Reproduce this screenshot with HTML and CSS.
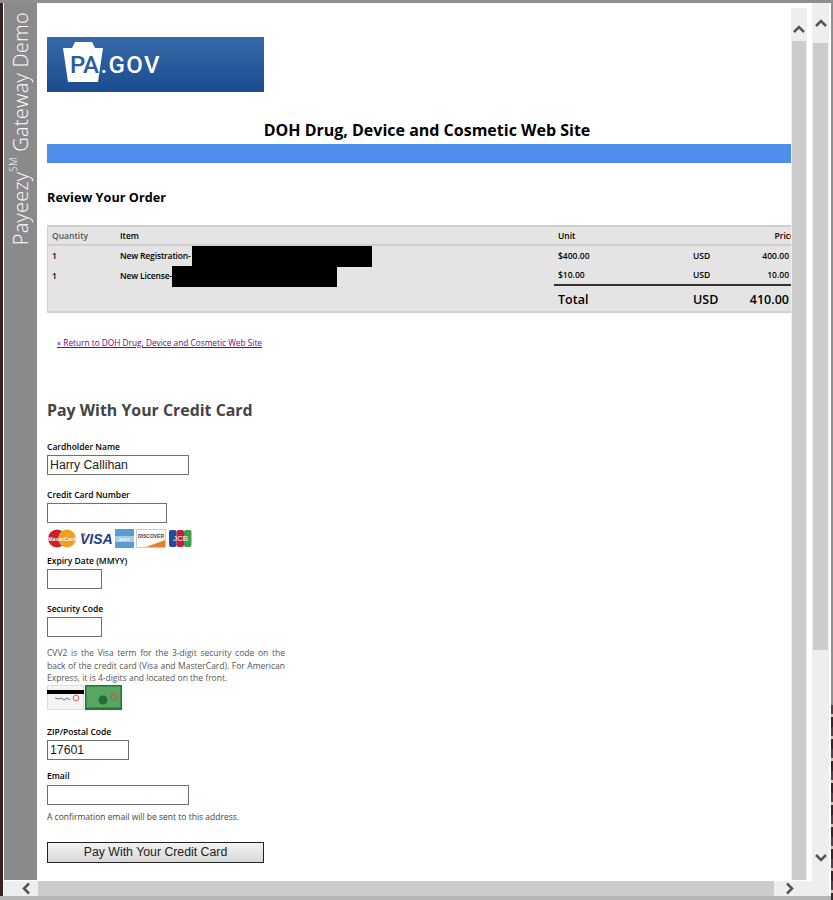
FILE: index.html
```html
<!DOCTYPE html>
<html lang="en">
<head>
  <meta charset="UTF-8">
  <title>Payeezy Gateway Demo</title>
  <link rel="stylesheet" href="styles.css">
</head>
<body>
  <div class="ventana">
    <div class="dialogo">
      <div class="cuerpo">

        <!-- Side band -->
        <div class="banda"><span>Payeezy<sup>SM</sup> Gateway Demo</span></div>

        <div class="contenido">
          <!-- Logo -->
          <div class="logo">
            <svg width="43" height="42" viewBox="0 0 43 42">
              <path class="logo-piedra" d="M13 1H30L33 7H41L36 41H6L1 7H10Z"/>
            </svg>
            <span class="logo-pa">PA</span><span class="logo-gov">.GOV</span>
          </div>

          <h1>DOH Drug, Device and Cosmetic Web Site</h1>
          <div class="barra"></div>

          <h2>Review Your Order</h2>

          <!-- Order -->
          <table class="pedido">
            <thead>
              <tr>
                <th class="col-cant gris">Quantity</th>
                <th class="col-item">Item</th>
                <th class="col-unit">Unit</th>
                <th class="col-mon"></th>
                <th class="col-precio">Price</th>
              </tr>
            </thead>
            <tbody>
              <tr>
                <td>1</td>
                <td><span class="marca">New Registration-<i class="tapa tapa-1"></i></span></td>
                <td>$400.00</td>
                <td>USD</td>
                <td class="importe">400.00</td>
              </tr>
              <tr>
                <td>1</td>
                <td><span class="marca">New License-<i class="tapa tapa-2"></i></span></td>
                <td>$10.00</td>
                <td>USD</td>
                <td class="importe">10.00</td>
              </tr>
              <tr class="total">
                <td></td>
                <td></td>
                <td>Total</td>
                <td>USD</td>
                <td class="importe">410.00</td>
              </tr>
            </tbody>
          </table>

          <a class="volver" href="#">« Return to DOH Drug, Device and Cosmetic Web Site</a>

          <h3>Pay With Your Credit Card</h3>

          <!-- Form -->
          <form class="pago">
            <label class="l-nombre">Cardholder Name</label>
            <input type="text" class="ancho-142" value="Harry Callihan">

            <label class="l-tarjeta">Credit Card Number</label>
            <input type="text" class="ancho-120">

            <div class="tarjetas">
              <svg width="30" height="19" viewBox="0 0 30 19">
                <circle cx="10" cy="9.500" r="9" fill="#c8202c"/>
                <circle cx="20" cy="9.500" r="9" fill="#f0a020"/>
                <text x="15" y="11.500" class="mc-texto">MasterCard</text>
              </svg>
              <svg width="34" height="19" viewBox="0 0 34 19">
                <path d="M1 4h5l1 4z" fill="#eda51e"/>
                <text x="1" y="15" class="visa-texto">VISA</text>
              </svg>
              <svg width="19" height="19" viewBox="0 0 19 19">
                <rect width="19" height="19" fill="#5b9bd0"/>
                <rect y="7" width="19" height="6" fill="#a6cde8"/>
                <text x="9.500" y="11.500" class="amex-texto">AMEX</text>
              </svg>
              <svg width="30" height="19" viewBox="0 0 30 19">
                <rect x=".5" y=".5" width="29" height="18" fill="#fff" stroke="#ccc"/>
                <path d="M10 18 29 11v7z" fill="#e8822a"/>
                <text x="15" y="9" class="disc-texto">DISCOVER</text>
              </svg>
              <svg class="jcb" width="23" height="19" viewBox="0 0 23 19">
                <rect x="0" y="1" width="7.500" height="17" rx="2" fill="#1f4e96"/>
                <rect x="7.500" y="1" width="7.500" height="17" rx="2" fill="#c62038"/>
                <rect x="15" y="1" width="7.500" height="17" rx="2" fill="#3f9f48"/>
                <text x="11.500" y="12" class="jcb-texto">JCB</text>
              </svg>
            </div>

            <label class="l-expira">Expiry Date (MMYY)</label>
            <input type="text" class="ancho-55">

            <label class="l-codigo">Security Code</label>
            <input type="text" class="ancho-55">

            <p class="ayuda">CVV2 is the Visa term for the 3-digit security code on the back of the credit card (Visa and MasterCard). For American Express, it is 4-digits and located on the front.</p>

            <div class="cvv">
              <svg width="37" height="25" viewBox="0 0 37 25">
                <rect x=".5" y=".5" width="36" height="24" fill="#f4f4f4" stroke="#ddd"/>
                <rect y="5" width="37" height="4" fill="#000"/>
                <path d="M8 13l4 1 2-1 3 2 3-2 3 2" fill="none" stroke="#333" stroke-width=".7"/>
                <circle cx="29" cy="13" r="2.800" fill="none" stroke="#d33" stroke-width=".8"/>
              </svg>
              <svg width="37" height="25" viewBox="0 0 37 25">
                <rect width="37" height="25" fill="#1f7a2c"/>
                <rect x="1.500" y="1.500" width="34" height="21" fill="#58a662"/>
                <circle cx="18" cy="15" r="4.500" fill="#2c6a38"/>
                <circle cx="29" cy="12" r="3" fill="none" stroke="#e33" stroke-width=".8"/>
              </svg>
            </div>

            <label class="l-zip">ZIP/Postal Code</label>
            <input type="text" class="ancho-82" value="17601">

            <label class="l-email">Email</label>
            <input type="text" class="ancho-142 campo-email">

            <p class="nota">A confirmation email will be sent to this address.</p>

            <button type="button" class="boton">Pay With Your Credit Card</button>
          </form>
        </div>

        <!-- Inner scrollbar -->
        <div class="scroll-v interno">
          <div class="scroll-tapa">
            <svg width="14" height="9" viewBox="0 0 14 9"><path d="M2 8l5-5 5 5"/></svg>
          </div>
          <div class="scroll-guia"></div>
        </div>
      </div>

      <!-- Bottom scrollbar -->
      <div class="scroll-h">
        <svg class="flecha-izq" width="10" height="13" viewBox="0 0 10 13"><path d="M8 1.500 3 6.500l5 5"/></svg>
        <div class="scroll-h-guia"></div>
        <svg class="flecha-der" width="10" height="13" viewBox="0 0 10 13"><path d="M2 1.500l5 5-5 5"/></svg>
      </div>
    </div>

    <!-- Page scrollbar -->
    <div class="scroll-v externo">
      <svg class="flecha-arriba" width="14" height="9" viewBox="0 0 14 9"><path d="M2 8l5-5 5 5"/></svg>
      <div class="scroll-guia"></div>
      <svg class="flecha-abajo" width="14" height="9" viewBox="0 0 14 9"><path d="M2 1l5 5 5-5"/></svg>
    </div>
  </div>
</body>
</html>
```

FILE: styles.css
```css
body {
  margin: 0;
  background: #fff;
  font-family: "Open Sans", sans-serif;
  color: #000;
}

.ventana {
  box-sizing: border-box;
  position: relative;
  width: 833px;
  height: 900px;
  display: flex;
  overflow: hidden;
  padding: 3px 4px 4px 4px;
  background: #fff;
  box-shadow: inset 0 3px 0 #8f8f8f, inset 0 -4px 0 #b5b5b5, inset 3px 0 0 #3a2422, inset -2px 0 0 #8f8f8f;
}

/* bit of desktop showing past the window */
.ventana::after {
  content: "";
  position: absolute;
  right: 0;
  top: 705px;
  bottom: 0;
  width: 2px;
  background: repeating-linear-gradient(#5a3a4a 0 9px, #d8c4b0 9px 12px, #3a2228 12px 22px);
}

.dialogo {
  width: 808px;
  display: flex;
  flex-direction: column;
}

.cuerpo {
  height: 877px;
  display: flex;
  overflow: hidden;
}

/* side band */
.banda {
  width: 33px;
  flex: none;
  background: #8a8a8c;
  display: flex;
  justify-content: center;
  align-items: flex-end;
}

.banda span {
  writing-mode: vertical-rl;
  transform: rotate(180deg);
  margin-bottom: 635px;
  font-size: 20px;
  font-weight: 300;
  letter-spacing: 0.25px;
  color: #fff;
  white-space: nowrap;
  line-height: 33px;
}

.banda sup {
  font-size: 10px;
  line-height: 0;
}

.contenido {
  width: 754px;
  flex: none;
  box-sizing: border-box;
  padding: 34px 0 0 10px;
  overflow: hidden;
  background: #fff;
}

/* logo */
.logo {
  width: 217px;
  height: 55px;
  display: flex;
  align-items: center;
  position: relative;
  padding-left: 23px;
  box-sizing: border-box;
  background: linear-gradient(#3669aa, #1a4c90);
  color: #fff;
  font-family: Roboto, sans-serif;
  font-weight: 500;
  font-size: 24px;
}

.logo svg {
  position: absolute;
  left: 15px;
  top: 4px;
}

.logo-piedra {
  fill: #fff;
}

.logo-pa {
  position: relative;
  color: #2a5c9f;
  letter-spacing: -0.5px;
}

.logo-gov {
  position: relative;
  margin-left: 2px;
  letter-spacing: 1.400px;
}

h1 {
  width: 760px;
  margin: 25px 0 0 0;
  font-size: 16px;
  line-height: 27px;
  text-align: center;
}

.barra {
  width: 760px;
  height: 19px;
  background: #4f8ded;
}

h2 {
  margin: 24px 0 0 0;
  font-size: 12.700px;
  line-height: 20px;
}

/* order */
.pedido {
  width: 748px;
  margin-top: 18px;
  border-collapse: collapse;
  table-layout: fixed;
  background: #e4e4e4;
  border-top: 2px solid #cfcfcf;
  border-bottom: 2px solid #d2d2d2;
  border-left: 1px solid #cfcfcf;
  font-size: 8.5px;
  font-weight: 600;
}

.pedido th {
  height: 17px;
  padding: 0 0 0 4px;
  text-align: left;
  font-weight: 600;
  border-bottom: 2px solid #cfcfcf;
}

.pedido td {
  height: 19px;
  padding: 0 0 0 4px;
}

.col-cant { width: 64px; }
.col-item { width: 434px; }
.col-unit { width: 131px; }
.col-mon { width: 46px; }

.pedido .col-precio {
  text-align: right;
  padding-right: 0;
}

.gris {
  color: #555;
}

.pedido .importe {
  text-align: right;
  padding-right: 6px;
}

.marca {
  position: relative;
  letter-spacing: -0.15px;
}

/* redacted names */
.tapa {
  position: absolute;
  top: -4px;
  height: 21px;
  background: #000;
}

.tapa-1 {
  left: calc(100% + 1.500px);
  width: 180px;
}

.tapa-2 {
  left: 100%;
  width: 165px;
}

.pedido .total td {
  height: 23px;
  padding-top: 2px;
  font-size: 12.5px;
}

.pedido .total td:nth-child(n+3) {
  border-top: 2px solid #333;
}

.volver {
  display: block;
  margin: 23px 0 0 10px;
  font-size: 8.300px;
  line-height: 14px;
  color: #800080;
}

h3 {
  margin: 48px 0 0 0;
  font-size: 15.900px;
  line-height: 24px;
  color: #444;
}

/* form */
.pago {
  display: flex;
  flex-direction: column;
  align-items: flex-start;
}

.pago label {
  font-size: 8.5px;
  font-weight: 600;
  line-height: 12px;
}

.l-nombre { margin-top: 19px; }
.l-tarjeta { margin-top: 14px; }
.l-expira { margin-top: 7px; }
.l-codigo { margin-top: 14px; }
.l-zip { margin-top: 16px; }
.l-email { margin-top: 10px; }

.pago input {
  box-sizing: border-box;
  height: 20px;
  margin: 2px 0 0 0;
  padding: 0 2px;
  border: 1px solid #707070;
  background: #fff;
  font-family: "Liberation Sans", sans-serif;
  font-size: 12.300px;
  color: #222;
}

.pago .campo-email {
  margin-top: 3px;
}

.ancho-142 { width: 142px; }
.ancho-120 { width: 120px; }
.ancho-82 { width: 82px; }
.ancho-55 { width: 55px; }

.tarjetas {
  display: flex;
  gap: 2px;
  margin-top: 6px;
}

.tarjetas svg,
.cvv svg {
  display: block;
}

.tarjetas .jcb {
  margin-left: 1px;
}

.mc-texto {
  font-family: "Liberation Sans", sans-serif;
  font-size: 5px;
  font-weight: bold;
  fill: #fff;
  text-anchor: middle;
}

.visa-texto {
  font-family: "Liberation Sans", sans-serif;
  font-size: 14px;
  font-weight: bold;
  font-style: italic;
  fill: #1d3f8f;
}

.amex-texto {
  font-family: "Liberation Sans", sans-serif;
  font-size: 4px;
  fill: #fff;
  text-anchor: middle;
}

.disc-texto {
  font-family: "Liberation Sans", sans-serif;
  font-size: 5px;
  font-weight: bold;
  fill: #444;
  text-anchor: middle;
}

.jcb-texto {
  font-family: "Liberation Sans", sans-serif;
  font-size: 8px;
  fill: #fff;
  text-anchor: middle;
}

.ayuda {
  width: 238px;
  margin: 10px 0 0 0;
  font-size: 8.5px;
  line-height: 12.500px;
  color: #555;
  text-align: justify;
}

.cvv {
  display: flex;
  gap: 1px;
  margin-top: 0;
}

.nota {
  margin: 6px 0 0 0;
  font-size: 8.5px;
  line-height: 12px;
  color: #444;
}

.boton {
  width: 217px;
  height: 21px;
  margin-top: 19px;
  padding: 0;
  border: 1px solid #222;
  background: linear-gradient(#f2f2f2, #d8d8d8);
  font-family: "Liberation Sans", sans-serif;
  font-size: 12.300px;
  color: #222;
}

/* scrollbars */
.scroll-v {
  flex: none;
  display: flex;
  flex-direction: column;
  align-items: center;
  background: #eee;
}

.scroll-v svg path,
.scroll-h svg path {
  fill: none;
  stroke: #555;
  stroke-width: 2.500;
}

.scroll-guia {
  background: #ccc;
}

.interno {
  width: 16px;
  height: 872px;
  margin: 5px 0 0 0;
}

.scroll-tapa {
  height: 33px;
  display: flex;
  align-items: flex-end;
  justify-content: center;
  box-sizing: border-box;
}

.scroll-tapa svg {
  margin-bottom: 8px;
}

.interno .scroll-guia {
  flex: 1;
  width: 14px;
}

.externo {
  width: 17px;
  height: 893px;
}

.flecha-arriba {
  margin-top: 15px;
}

.externo .scroll-guia {
  width: 15px;
  height: 607px;
  margin-top: 16px;
}

.flecha-abajo {
  margin-top: 204px;
}

.scroll-h {
  height: 15px;
  margin-top: 1px;
  width: 808px;
  display: flex;
  align-items: center;
  background: #eee;
}

.flecha-izq {
  margin-left: 17px;
}

.scroll-h-guia {
  width: 736px;
  height: 15px;
  margin-left: 7px;
  background: #ccc;
}

.flecha-der {
  margin-left: 11px;
}
```
